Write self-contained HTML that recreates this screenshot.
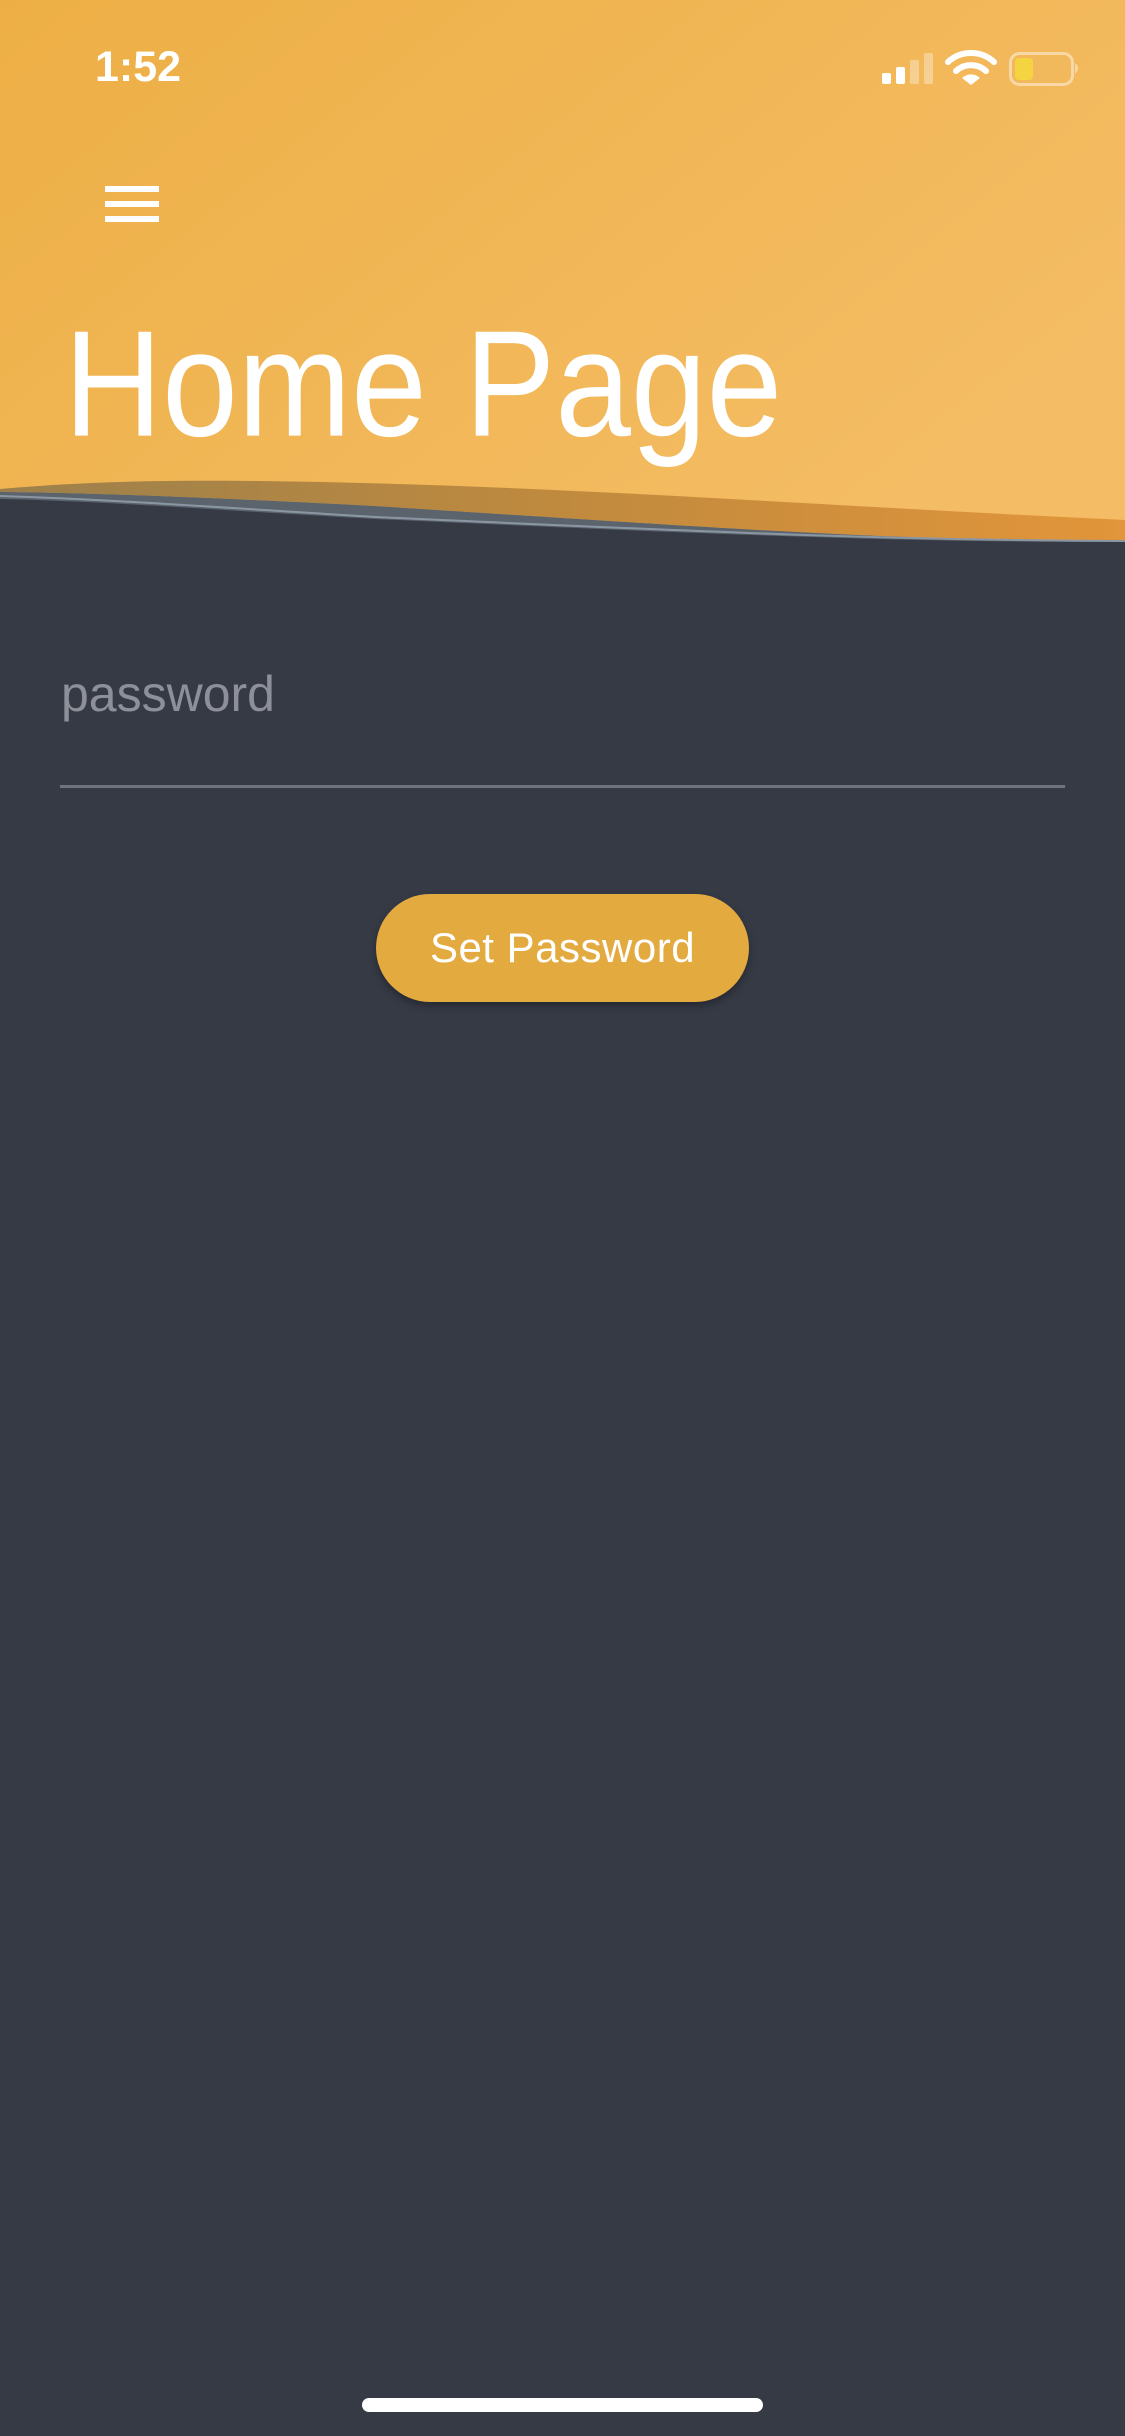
<!DOCTYPE html>
<html><head><meta charset="utf-8"><style>
html,body{margin:0;padding:0}
body{width:1125px;height:2436px;background:#363a45;position:relative;overflow:hidden;font-family:"Liberation Sans",sans-serif}
.abs{position:absolute}
</style></head><body>
<svg class="abs" style="left:0;top:0" width="1125" height="560" viewBox="0 0 1125 560">
<defs>
<linearGradient id="hg" x1="0" y1="0" x2="1" y2="0.6"><stop offset="0" stop-color="#edaf45"/><stop offset="1" stop-color="#f4bc64"/></linearGradient>
<linearGradient id="bg" x1="0" y1="0" x2="1" y2="0"><stop offset="0" stop-color="#9c804c"/><stop offset="0.5" stop-color="#c08a3e"/><stop offset="1" stop-color="#e2953a"/></linearGradient>
</defs>
<rect x="0" y="0" width="1125" height="560" fill="#363a45"/>
<path d="M0,0 H1125 V541 C900,541 750,535 375,518 C200,508 100,500 0,498 Z" fill="url(#hg)"/>
<path d="M0,489 C80,482 150,480 260,481 C560,485 800,505 1125,520 V541 C900,541 750,530 375,506 C200,497 100,493 0,492 Z" fill="url(#bg)"/>
<path d="M0,492 C100,493 200,497 375,506 C750,530 900,541 1125,541 V542 C900,542 750,536 375,519 C200,509 100,501 0,499 Z" fill="#5b636c"/>
<path d="M0,496 C100,499 200,506 375,517 C750,534 900,540 1125,541" fill="none" stroke="#8a97a3" stroke-width="2"/>
</svg>
<div class="abs" style="left:95px;top:43px;font-size:43px;font-weight:bold;color:#fff">1:52</div>
<svg class="abs" style="left:870px;top:45px" width="220" height="50" viewBox="870 45 220 50">
<rect x="882" y="73" width="9" height="11" rx="2" fill="#fff"/>
<rect x="896" y="67" width="9" height="17" rx="2" fill="#fff"/>
<rect x="910" y="60" width="9" height="24" rx="2" fill="#fff" opacity=".35"/>
<rect x="924" y="53" width="9" height="31" rx="2" fill="#fff" opacity=".35"/>
<path d="M948,62 A34,34 0 0 1 994,62" fill="none" stroke="#fff" stroke-width="6" stroke-linecap="round"/>
<path d="M956,71 A22,22 0 0 1 986,71" fill="none" stroke="#fff" stroke-width="6" stroke-linecap="round"/>
<path d="M962,78 L971,85 L980,78 A13,13 0 0 0 962,78 Z" fill="#fff"/>
<rect x="1010.5" y="53.5" width="62" height="31" rx="9" fill="none" stroke="#fff" stroke-opacity=".45" stroke-width="3"/>
<rect x="1015" y="58" width="18" height="22" rx="4" fill="#f5d442"/>
<path d="M1075,63 Q1081,68 1075,74 Z" fill="#fff" opacity=".45"/>
</svg>
<div class="abs" style="left:105px;top:186px;width:54px;height:6px;background:#fff"></div>
<div class="abs" style="left:105px;top:201px;width:54px;height:6px;background:#fff"></div>
<div class="abs" style="left:105px;top:216px;width:54px;height:6px;background:#fff"></div>
<div class="abs" style="left:64px;top:308px;font-size:136px;color:#fff;line-height:1;white-space:nowrap;transform:scaleY(1.11);transform-origin:0 0">Home Page</div>
<div class="abs" style="left:61px;top:664px;font-size:50px;color:#8d9099;line-height:1.2">password</div>
<div class="abs" style="left:60px;top:785px;width:1005px;height:3px;background:#70737b"></div>
<div class="abs" style="left:376px;top:894px;width:373px;height:108px;border-radius:54px;background:#e3aa40;box-shadow:0 4px 8px rgba(0,0,0,.3);color:#fff;font-size:42px;text-align:center;line-height:108px;letter-spacing:0.5px">Set Password</div>
<div class="abs" style="left:362px;top:2398px;width:401px;height:14px;border-radius:7px;background:#fff"></div>
</body></html>
